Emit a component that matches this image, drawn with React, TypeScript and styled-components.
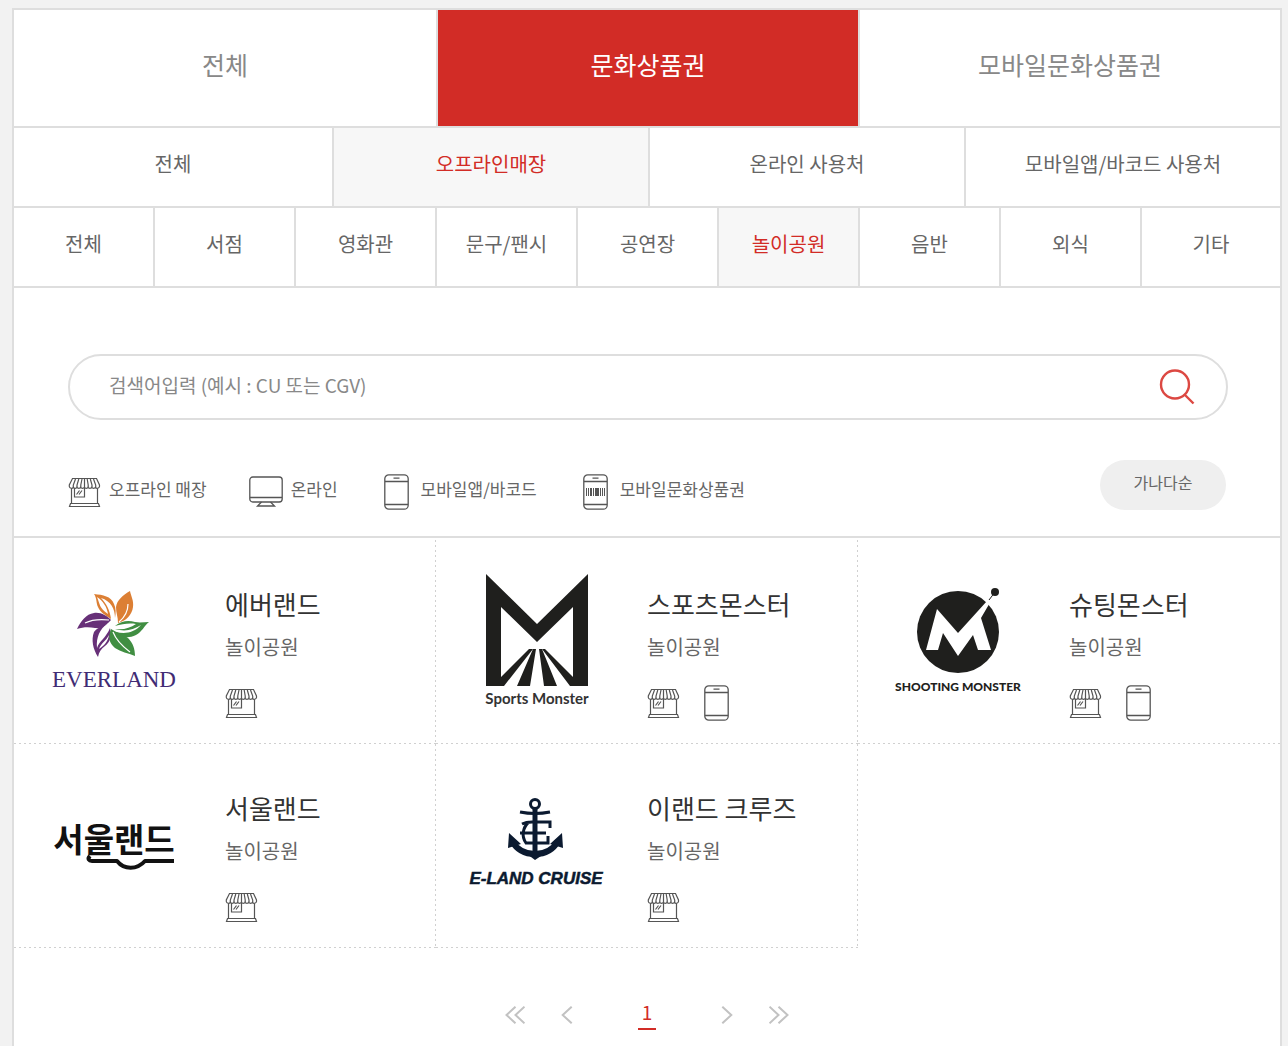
import React, { useState } from "react";
import styled, { createGlobalStyle, css } from "styled-components";

const line = "#dedede";
const red = "#d22c26";
const sans = '"Noto Sans CJK KR", "Noto Sans", sans-serif';

const GlobalStyle = createGlobalStyle`
  *, *::before, *::after { box-sizing: border-box; }
  body { margin: 0; background: #f2f2f2; font-family: ${sans}; color: #666; }
  button, input { font: inherit; color: inherit; }
  ul { margin: 0; padding: 0; list-style: none; }
`;

const Page = styled.div`
  padding: 8px 6px 0 12px;
`;

const Panel = styled.main`
  min-height: calc(100vh - 8px);
  padding-bottom: 16px;
  background: #fff;
  border: 2px solid ${line};
  border-bottom: 0;
`;

const TabRow = styled.div<{ $columns: string }>`
  display: grid;
  grid-template-columns: ${(p) => p.$columns};
  border-bottom: 2px solid ${line};
`;

const activeMain = css`
  background: ${red};
  color: #fff;
`;

const activeSub = css`
  background: #f7f7f7;
  color: ${red};
`;

const Tab = styled.button<{ $main?: boolean; $active: boolean }>`
  height: ${(p) => (p.$main ? 116 : 78)}px;
  padding: 0 0 8px;
  border: 0;
  border-right: 2px solid ${line};
  background: #fff;
  color: ${(p) => (p.$main ? "#888" : "#666")};
  font-size: ${(p) => (p.$main ? 25 : 20)}px;
  cursor: pointer;
  ${(p) => p.$active && (p.$main ? activeMain : activeSub)}

  &:last-child {
    border-right: 0;
  }
`;

const Filters = styled.section`
  padding: 66px 52px 26px 54px;
  border-bottom: 2px solid ${line};
`;

const SearchForm = styled.form`
  display: flex;
  align-items: center;
  height: 66px;
  padding: 0 31px 0 39px;
  border: 2px solid ${line};
  border-radius: 33px;
`;

const SearchInput = styled.input`
  flex: 1;
  min-width: 0;
  height: 54px;
  padding: 0 0 6px;
  border: 0;
  outline: 0;
  background: none;
  font-size: 19px;

  &::placeholder {
    color: #888;
    opacity: 1;
  }
`;

const IconButton = styled.button`
  display: flex;
  padding: 0;
  border: 0;
  background: none;
  cursor: pointer;
`;

const LegendBar = styled.div`
  display: flex;
  align-items: flex-start;
  justify-content: space-between;
  margin-top: 40px;
  padding-right: 2px;
`;

const Legend = styled.ul`
  display: flex;
  gap: 42px;
  padding-top: 14px;
`;

const LegendItem = styled.li`
  display: flex;
  align-items: center;
  gap: 8px;
  height: 36px;
  font-size: 17px;
  line-height: 30px;
`;

const LegendIcon = styled.span`
  display: flex;
  justify-content: center;
  min-width: 33px;
`;

const LegendText = styled.span`
  padding-bottom: 6px;
`;

const SortButton = styled.button`
  width: 126px;
  height: 50px;
  padding: 0 0 6px;
  border: 0;
  border-radius: 25px;
  background: #efefef;
  font-size: 16px;
  cursor: pointer;
`;

const Stores = styled.ul`
  display: grid;
  grid-template-columns: repeat(3, 1fr);
  padding-top: 2px;
`;

const dots = (dir: string) => `repeating-linear-gradient(${dir}, #d0d0d0 0 2px, transparent 2px 5px)`;

const Store = styled.li<{ $lastColumn: boolean }>`
  display: flex;
  gap: 36px;
  height: 204px;
  padding: 26px 0 0 25px;
  background-image: ${dots("to right")}, ${(p) => (p.$lastColumn ? "none" : dots("to bottom"))};
  background-position: left bottom, right top;
  background-size: 100% 1px, 1px 100%;
  background-repeat: no-repeat;
`;

const StoreInfo = styled.div`
  padding-top: 18px;
`;

const StoreName = styled.a`
  display: block;
  color: #333;
  font-size: 26px;
  line-height: 40px;
  text-decoration: none;
`;

const StoreType = styled.p`
  margin: 8px 0 23px;
  font-size: 20px;
  line-height: 30px;
`;

const Channels = styled.div`
  display: flex;
  align-items: center;
  gap: 24px;
  height: 36px;
`;

const Pager = styled.nav`
  display: flex;
  align-items: center;
  justify-content: center;
  gap: 36px;
  margin-top: 52px;
`;

const PageLink = styled.a`
  width: 18px;
  margin: 0 29px;
  padding-bottom: 4px;
  border-bottom: 2px solid ${red};
  color: ${red};
  font-size: 19px;
  line-height: 24px;
  text-align: center;
  text-decoration: none;
`;

const ShopIcon = () => (
  <svg width="33" height="32" viewBox="0 0 33 32" fill="none" stroke="#555" strokeWidth="1.200" aria-hidden="true">
    <path d="M4.500 2.500H28.500L31.500 9v1.500a2.200 2.200 0 0 1-4 .8 2.200 2.200 0 0 1-3.700 0 2.200 2.200 0 0 1-3.700 0 2.200 2.200 0 0 1-3.700 0 2.200 2.200 0 0 1-3.700 0 2.200 2.200 0 0 1-3.700 0 2.200 2.200 0 0 1-3.700 0 2.200 2.200 0 0 1-4-.8V9Z" />
    <path d="M7.500 3 5.300 9v2M10.800 3 9 9v2M14 3l-1.200 6v2M16.500 3v8M19.200 3l1 6v2M22.300 3l1.700 6v2M25.500 3l2.200 6v2" />
    <path d="M3.500 12.500v15M29.500 12.500v15M2.500 27.500h28l1 3h-30ZM6.500 12v9h10V12" />
    <path d="m8.500 18.500 3-4M11 18.500l3-4" />
  </svg>
);

const MonitorIcon = () => (
  <svg width="34" height="32" viewBox="0 0 34 32" fill="none" stroke="#555" strokeWidth="1.300" aria-hidden="true">
    <rect x=".8" y="1" width="32.400" height="25" rx="3" />
    <path d="M1 21.500h32M12.500 26 8.500 30h17l-4-4" />
  </svg>
);

const PhoneIcon = ({ barcode = false }: { barcode?: boolean }) => (
  <svg width="25" height="36" viewBox="0 0 25 36" fill="none" stroke="#555" strokeWidth="1.300" aria-hidden="true">
    <rect x=".8" y=".8" width="23.400" height="34.400" rx="4" />
    <path d="M1 7.500h23M1 30.500h23M9.500 4.200h6" />
    {barcode && (
      <path
        stroke="none"
        fill="#555"
        d="M3 14h1v8H3zM5 14h1v8H5zM7 14h2v8H7zM10 14h1v8h-1zM12 14h4v8h-4zM17 14h1v8h-1zM19 14h1v8h-1zM21 14h1v8h-1z"
      />
    )}
  </svg>
);

const SearchIcon = () => (
  <svg width="36" height="36" viewBox="0 0 36 36" fill="none" stroke="#dc4842" strokeWidth="2.400" aria-hidden="true">
    <circle cx="16" cy="15.500" r="14" />
    <path d="m25.500 25.500 9 9" />
  </svg>
);

const Chevron = ({ double = false, flip = false }: { double?: boolean; flip?: boolean }) => (
  <svg
    width={double ? 20 : 12}
    height="18"
    viewBox={double ? "0 0 20 18" : "0 0 12 18"}
    fill="none"
    stroke="#c2c2c2"
    strokeWidth="2"
    aria-hidden="true"
  >
    <g transform={flip ? `matrix(-1 0 0 1 ${double ? 20 : 12} 0)` : undefined}>
      <path d={double ? "M10.500 .7 1.500 9l9 8.300M19.500 .7 10.500 9l9 8.300" : "M10.700 .7 1.700 9l9 8.300"} />
    </g>
  </svg>
);

const Logo = styled.svg`
  flex: none;
  width: 150px;
  height: 150px;
`;

const EverlandLogo = () => (
  <Logo viewBox="0 0 150 150" role="img" aria-label="EVERLAND">
    <path fill="#dc7f34" d="M91 25c-7 4-13 9-14 16 0 6 2 10 2 16 8-2 14-8 15-16 1-6-2-11-3-16Z" />
    <path fill="none" stroke="#fff" strokeWidth="1.200" d="M80 56c6-5 9-11 9-18" />
    <path fill="#dc7f34" d="M55 28c9 1 17 2 20 10 2 4 2 9 1 14 0-9-4-17-14-20 5 5 9 12 10 21-6-4-11-7-13-12-2-4-1-9-4-13Zm3 3c3 7 2 11 11 17-1-7-5-13-11-17Z" />
    <path fill="#673078" d="M38 63c4-8 9-15 17-16 7-1 13 3 17 7-5 5-9 9-16 8-6-1-12-1-18 1Z" />
    <path fill="none" stroke="#fff" strokeWidth="1.200" d="M46 57c8-4 15-4 24-3" />
    <path fill="#673078" d="M59 91c-5-8-7-17-4-25 2-3 7-6 13-8-7 5-11 13-10 24 2-7 9-10 13-20 2 9 0 14-5 18-4 3-6 6-7 11Zm1-8c6-4 9-8 10-14-3 6-8 8-10 14Z" />
    <path fill="#408e42" d="M72 63c-3 8-2 14 4 19 6 4 13 5 20 8 0-7-2-13-7-18-5-4-11-5-17-9Z" />
    <path fill="none" stroke="#fff" strokeWidth="1.200" d="M74 66c3 8 9 14 17 20" />
    <path fill="#408e42" d="M76 60c6-5 13-6 20-4 5 1 9 0 14 0-5 4-7 10-13 13-7 3-13 4-20-3 9 2 18 1 25-7-8 5-16 7-26 4 9 1 15-1 21-5-7-1-14 0-21 2Z" />
    <text x="75" y="121" textAnchor="middle" fill="#412b74" fontFamily="'Liberation Serif', serif" fontSize="23">
      EVERLAND
    </text>
  </Logo>
);

const SportsMonsterLogo = () => (
  <Logo viewBox="0 0 150 150" role="img" aria-label="Sports Monster">
    <path fill="#1f1f1d" d="M25 8 76 58 127 8V120H109L81 83h3l28 28V41L76 76 40 41v70l28-28h4L43 120H25Z" />
    <path fill="#1f1f1d" d="M72 83h3l-6 37H56ZM78 83h3l15 37H83Z" />
    <text x="76" y="138" textAnchor="middle" fill="#333" fontFamily="Lato, sans-serif" fontSize="15" fontWeight="700">
      Sports Monster
    </text>
  </Logo>
);

const ShootingMonsterLogo = () => (
  <Logo viewBox="0 0 150 150" role="img" aria-label="SHOOTING MONSTER">
    <circle cx="75" cy="66" r="41" fill="#1f1f1d" />
    <path fill="#fff" d="m54 43 21 24 29-32 6-9 2 2-14 24 10 32H95l-5-15-15 21-15-23-5 17H43Z" />
    <circle cx="112" cy="26" r="4" fill="#1f1f1d" />
    <path stroke="#1f1f1d" d="m106 34 6-8" />
    <text x="75" y="125" textAnchor="middle" fill="#1f1f1d" fontFamily="Lato, sans-serif" fontSize="12" fontWeight="900">
      SHOOTING MONSTER
    </text>
  </Logo>
);

const SeoulLandLogo = () => (
  <Logo viewBox="0 0 150 150" role="img" aria-label="서울랜드">
    <text x="75" y="82" textAnchor="middle" fill="#111" fontFamily={sans} fontSize="33" fontWeight="700">
      서울랜드
    </text>
    <path
      fill="none"
      stroke="#111"
      strokeWidth="4"
      strokeLinejoin="round"
      d="M51 86c-3 3-1 5 2 5h25c7 9 20 9 28 0h29"
    />
  </Logo>
);

const ElandCruiseLogo = () => (
  <Logo viewBox="0 0 150 150" role="img" aria-label="E-LAND CRUISE">
    <g fill="none" stroke="#0b1a30">
      <circle cx="74" cy="34" r="4.500" strokeWidth="3" />
      <path strokeWidth="5" d="M74 38v46" />
      <path strokeWidth="3" d="M59 42c10 2 20 2 30 0" />
      <path strokeWidth="3" d="M61 54c4-2 7-2 10-2h18v6M68 52c-6 5-8 14-3 21h22v-7M59 63h26" />
      <path strokeWidth="6" d="M51 71c5 9 13 13 23 13s18-4 23-13" />
    </g>
    <path fill="#0b1a30" d="m48 63-1 15 13-4ZM101 63l1 15-13-4ZM66 84h17l-9 6Z" />
    <text
      x="75"
      y="114"
      textAnchor="middle"
      fill="#0b1a30"
      stroke="#0b1a30"
      strokeWidth=".5"
      fontFamily="'Liberation Sans', sans-serif"
      fontSize="17"
      fontStyle="italic"
      fontWeight="700"
    >
      E-LAND CRUISE
    </text>
  </Logo>
);

const mainTabs = ["전체", "문화상품권", "모바일문화상품권"];
const placeTabs = ["전체", "오프라인매장", "온라인 사용처", "모바일앱/바코드 사용처"];
const kindTabs = ["전체", "서점", "영화관", "문구/팬시", "공연장", "놀이공원", "음반", "외식", "기타"];

const legend = [
  { label: "오프라인 매장", icon: <ShopIcon /> },
  { label: "온라인", icon: <MonitorIcon /> },
  { label: "모바일앱/바코드", icon: <PhoneIcon /> },
  { label: "모바일문화상품권", icon: <PhoneIcon barcode /> },
];

const stores = [
  { name: "에버랜드", logo: <EverlandLogo />, mobile: false },
  { name: "스포츠몬스터", logo: <SportsMonsterLogo />, mobile: true },
  { name: "슈팅몬스터", logo: <ShootingMonsterLogo />, mobile: true },
  { name: "서울랜드", logo: <SeoulLandLogo />, mobile: false },
  { name: "이랜드 크루즈", logo: <ElandCruiseLogo />, mobile: false },
];

type TabsProps = { items: string[]; initial: number; columns: string; main?: boolean; label: string };

const Tabs = ({ items, initial, columns, main, label }: TabsProps) => {
  const [selected, setSelected] = useState(initial);
  return (
    <TabRow $columns={columns} role="group" aria-label={label}>
      {items.map((item, i) => (
        <Tab
          key={item}
          type="button"
          $main={main}
          $active={i === selected}
          aria-pressed={i === selected}
          onClick={() => setSelected(i)}
        >
          {item}
        </Tab>
      ))}
    </TabRow>
  );
};

export default function App() {
  return (
    <Page>
      <GlobalStyle />
      <Panel>
        <Tabs items={mainTabs} initial={1} columns="424fr 422fr 420fr" main label="상품권" />
        <Tabs items={placeTabs} initial={1} columns="320fr 316fr 316fr 314fr" label="사용처" />
        <Tabs items={kindTabs} initial={5} columns="repeat(8, 141fr) 138fr" label="업종" />
        <Filters>
          <SearchForm role="search" onSubmit={(e) => e.preventDefault()}>
            <SearchInput type="text" aria-label="검색어" placeholder="검색어입력 (예시 : CU 또는 CGV)" />
            <IconButton type="submit" aria-label="검색">
              <SearchIcon />
            </IconButton>
          </SearchForm>
          <LegendBar>
            <Legend>
              {legend.map(({ label, icon }) => (
                <LegendItem key={label}>
                  <LegendIcon>{icon}</LegendIcon>
                  <LegendText>{label}</LegendText>
                </LegendItem>
              ))}
            </Legend>
            <SortButton type="button">가나다순</SortButton>
          </LegendBar>
        </Filters>
        <Stores>
          {stores.map(({ name, logo, mobile }, i) => (
            <Store key={name} $lastColumn={i % 3 === 2}>
              {logo}
              <StoreInfo>
                <StoreName href="#">{name}</StoreName>
                <StoreType>놀이공원</StoreType>
                <Channels>
                  <ShopIcon />
                  {mobile && <PhoneIcon />}
                </Channels>
              </StoreInfo>
            </Store>
          ))}
        </Stores>
        <Pager aria-label="페이지">
          <IconButton type="button" aria-label="처음">
            <Chevron double />
          </IconButton>
          <IconButton type="button" aria-label="이전">
            <Chevron />
          </IconButton>
          <PageLink href="#" aria-current="page">
            1
          </PageLink>
          <IconButton type="button" aria-label="다음">
            <Chevron flip />
          </IconButton>
          <IconButton type="button" aria-label="마지막">
            <Chevron double flip />
          </IconButton>
        </Pager>
      </Panel>
    </Page>
  );
}
